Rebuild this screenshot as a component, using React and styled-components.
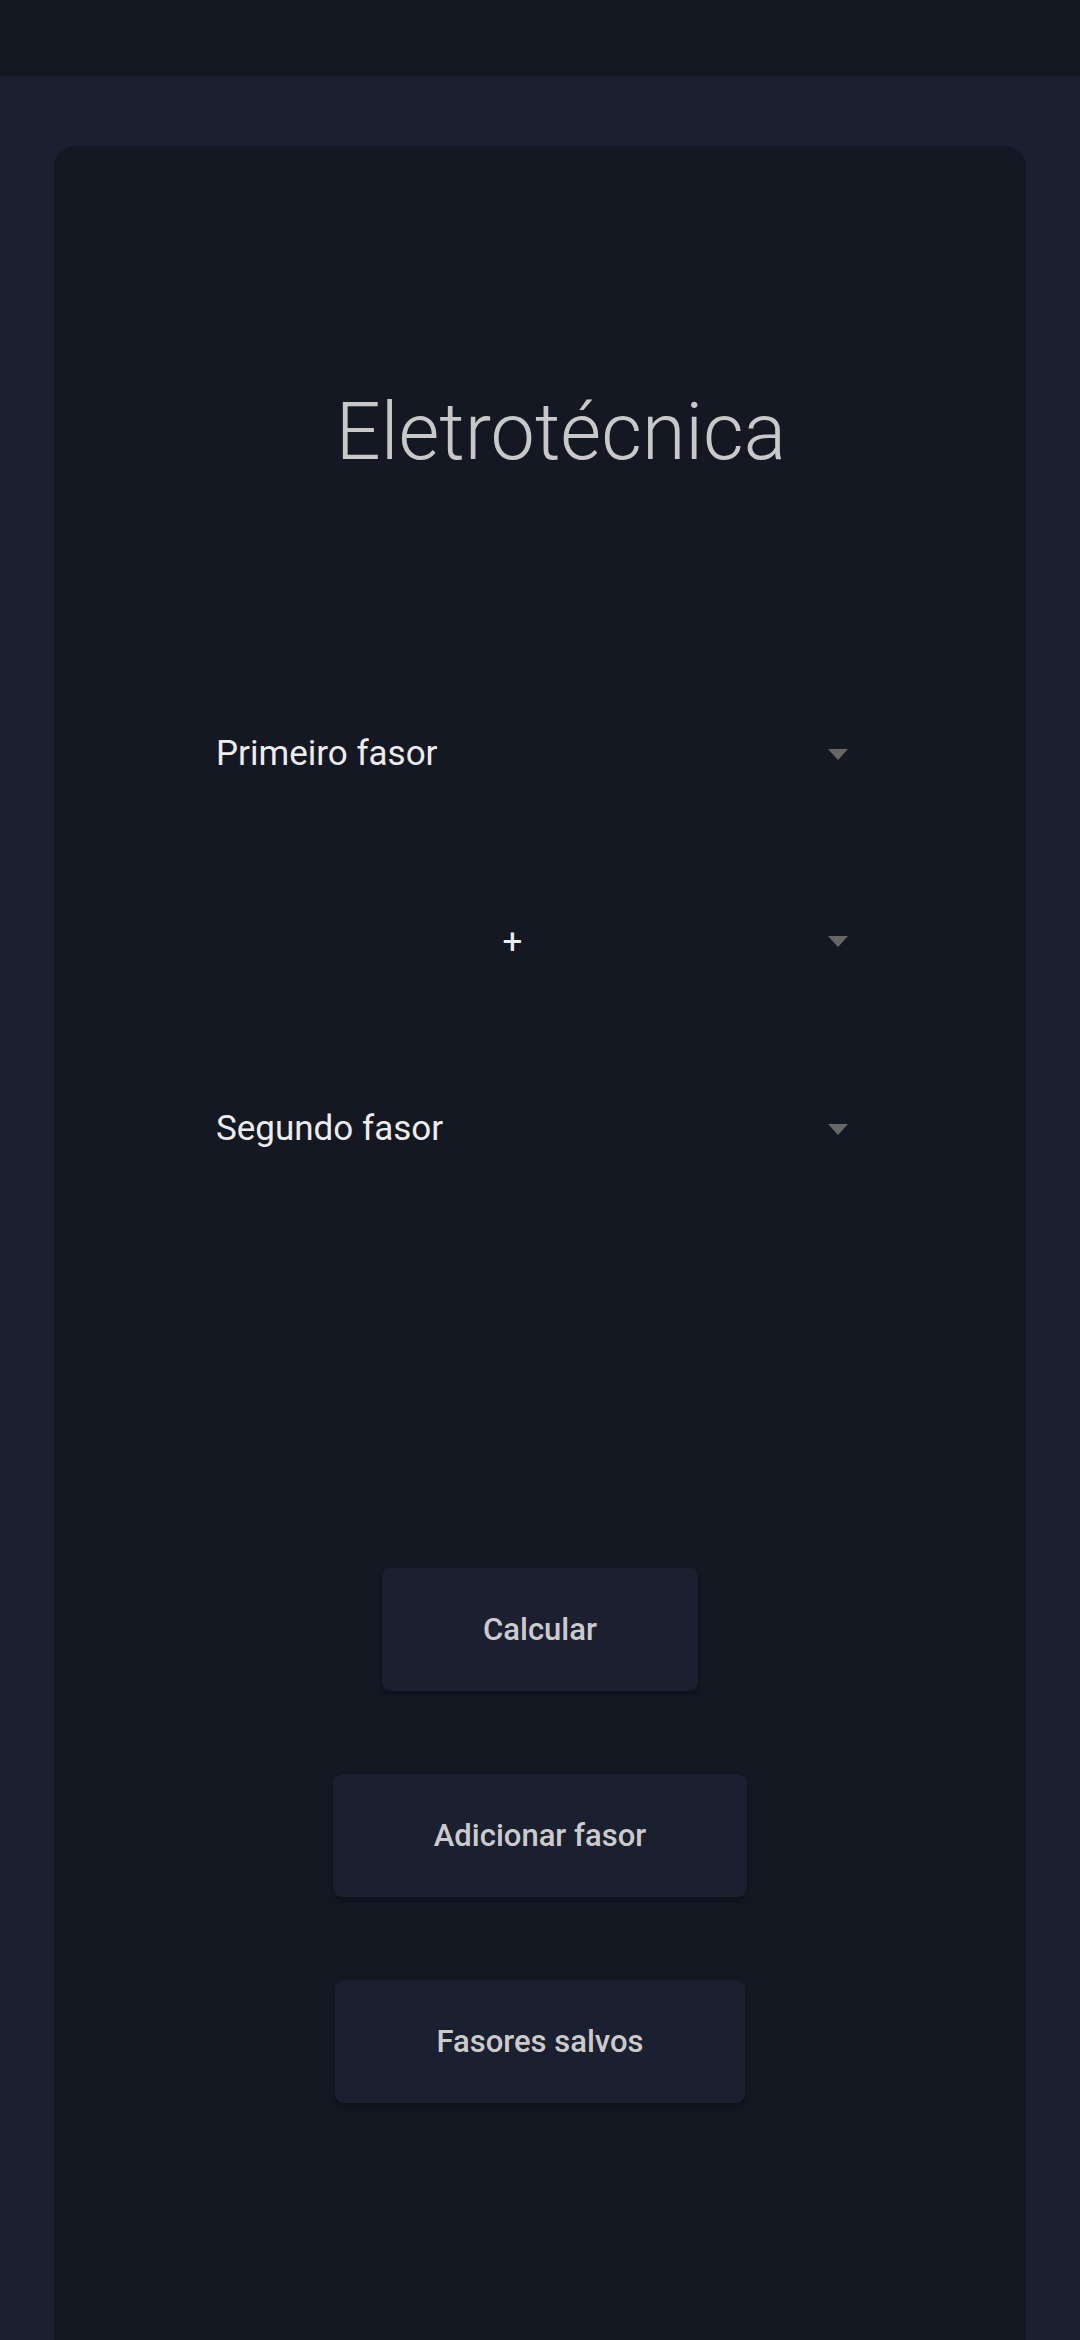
import React from 'react';
import styled, {createGlobalStyle} from 'styled-components';

const GlobalStyle = createGlobalStyle`
  html, body {
    margin: 0;
    padding: 0;
    background: #1a2030;
    font-family: Roboto, "Liberation Sans", Arial, sans-serif;
  }
  * {
    box-sizing: border-box;
  }
`;

const fields = [
  {label: 'Primeiro fasor', align: 'left'},
  {label: '+', align: 'center'},
  {label: 'Segundo fasor', align: 'left'},
];

const actions = ['Calcular', 'Adicionar fasor', 'Fasores salvos'];

const App = () => {
  return (
    <>
      <GlobalStyle />
      <StyledTopBar />
      <StyledPage>
        <StyledCard>
          <StyledTitle>Eletrotécnica</StyledTitle>
          <StyledFields>
            {fields.map((field) => (
              <StyledSelect key={field.label}>
                <StyledSelectLabel $align={field.align}>{field.label}</StyledSelectLabel>
                <StyledArrow />
              </StyledSelect>
            ))}
          </StyledFields>
          <StyledActions>
            {actions.map((text) => (
              <StyledButton key={text}>{text}</StyledButton>
            ))}
          </StyledActions>
        </StyledCard>
      </StyledPage>
    </>
  );
};

const StyledTopBar = styled.header`
  height: 76px;
  background: #141823;
`;

const StyledPage = styled.main`
  padding: 70px 54px 0;
  height: 2264px;
  overflow: hidden;
`;

const StyledCard = styled.section`
  background: #141823;
  border-radius: 20px 20px 0 0;
  min-height: 2300px;
  padding: 239px 162px 0;
  display: flex;
  flex-direction: column;
`;

const StyledTitle = styled.h1`
  margin: 0;
  padding-left: 42px;
  font-size: 79px;
  line-height: 94px;
  font-weight: 300;
  color: #c8c8c8;
  text-align: center;
`;

const StyledFields = styled.div`
  margin-top: 255px;
  display: flex;
  flex-direction: column;
  gap: 147.5px;
`;

const StyledSelect = styled.div`
  height: 40px;
  display: flex;
  align-items: center;
  gap: 19px;
  padding-right: 16px;
`;

const StyledSelectLabel = styled.span`
  flex: 1;
  font-size: 35px;
  line-height: 40px;
  color: #ececec;
  text-align: ${(props) => props.$align};
`;

const StyledArrow = styled.span`
  width: 0;
  height: 0;
  border-left: 10.5px solid transparent;
  border-right: 10.5px solid transparent;
  border-top: 11px solid #676767;
`;

const StyledActions = styled.div`
  margin-top: 419px;
  display: flex;
  flex-direction: column;
  align-items: center;
  gap: 83px;
`;

const StyledButton = styled.button`
  height: 123px;
  padding: 0 101px;
  border: none;
  border-radius: 9px;
  background: #1a2030;
  box-shadow: 0 3px 6px rgba(0, 0, 0, 0.3);
  color: #cbcbcb;
  font-family: Roboto, "Liberation Sans", Arial, sans-serif;
  font-size: 31px;
  font-weight: 500;
`;

export default App;
